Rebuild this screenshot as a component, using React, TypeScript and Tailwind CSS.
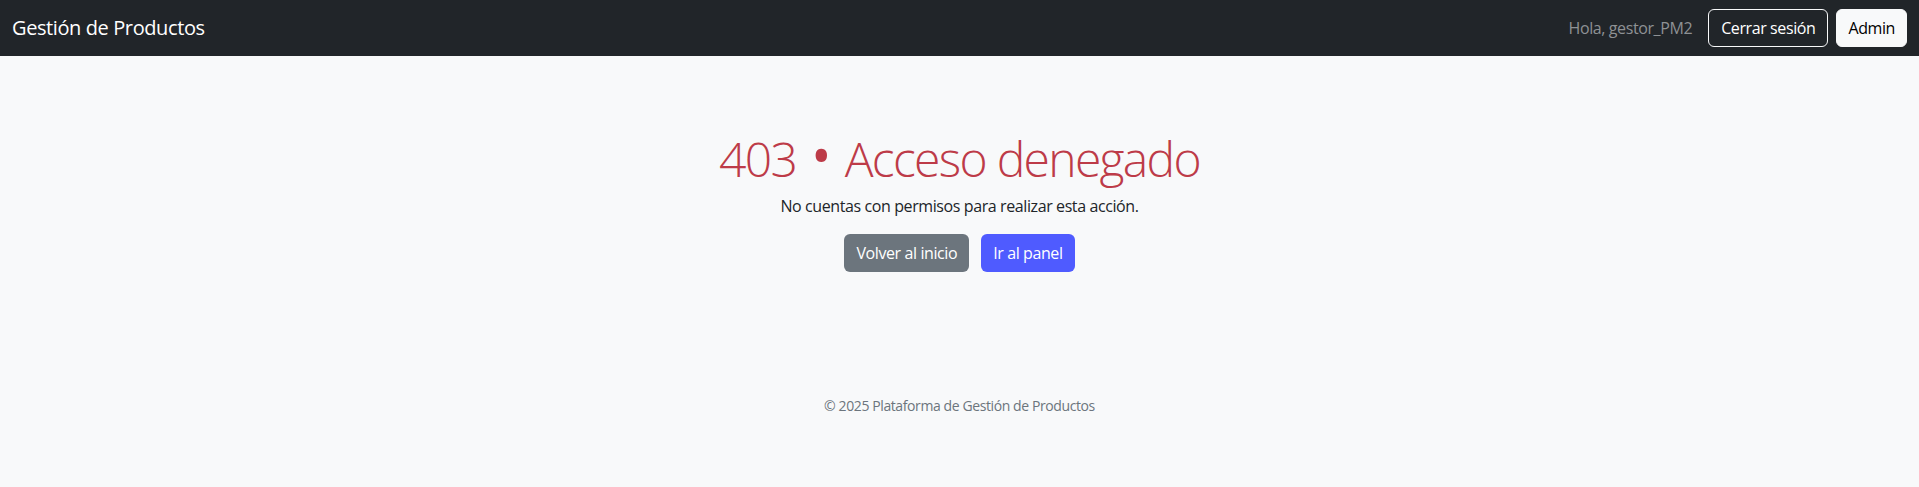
export default function App() {
  const font = { fontFamily: '"Open Sans", "Noto Sans", sans-serif' };
  return (
    <div className="min-h-[487px] bg-[#f8f9fa] flex flex-col tracking-tight" style={font}>
      <nav className="h-[56px] bg-[#212529] flex items-center justify-between px-[12px]">
        <span className="text-white text-[20px] leading-[30px]">Gestión de Productos</span>
        <div className="flex items-center">
          <span className="text-[#8e9194] text-[16px] leading-[24px] mr-[16px]">Hola, gestor_PM2</span>
          <button className="h-[38px] px-[12px] rounded-[6px] border border-[#f8f9fa] text-white text-[16px] leading-[24px] tracking-tight">Cerrar sesión</button>
          <button className="h-[38px] px-[11px] ml-[8px] rounded-[6px] border border-[#f8f9fa] bg-[#f8f9fa] text-[#000] text-[16px] leading-[24px] tracking-tight">Admin</button>
        </div>
      </nav>
      <main className="flex flex-col items-center pt-[74px]">
        <h1 className="text-[48px] leading-[57.6px] font-light text-[#bd3b48] mb-[6px] tracking-[-0.035em]">
          403 <span className="inline-block h-[24px] leading-[24px] text-[76px] align-[-6px]">•</span> Acceso denegado
        </h1>
        <p className="text-[16px] leading-[24px] text-[#212529] mb-[16px]">No cuentas con permisos para realizar esta acción.</p>
        <div className="flex gap-[12px]">
          <button className="h-[38px] px-[12px] rounded-[6px] bg-[#6c757d] text-white text-[16px] leading-[24px] tracking-tight">Volver al inicio</button>
          <button className="h-[38px] px-[12px] rounded-[6px] bg-[#4f5bff] text-white text-[16px] leading-[24px] tracking-tight">Ir al panel</button>
        </div>
      </main>
      <footer className="flex justify-center pt-[123px]">
        <span className="text-[14px] leading-[21px] text-[#6c757d]">© 2025 Plataforma de Gestión de Productos</span>
      </footer>
    </div>
  );
}
